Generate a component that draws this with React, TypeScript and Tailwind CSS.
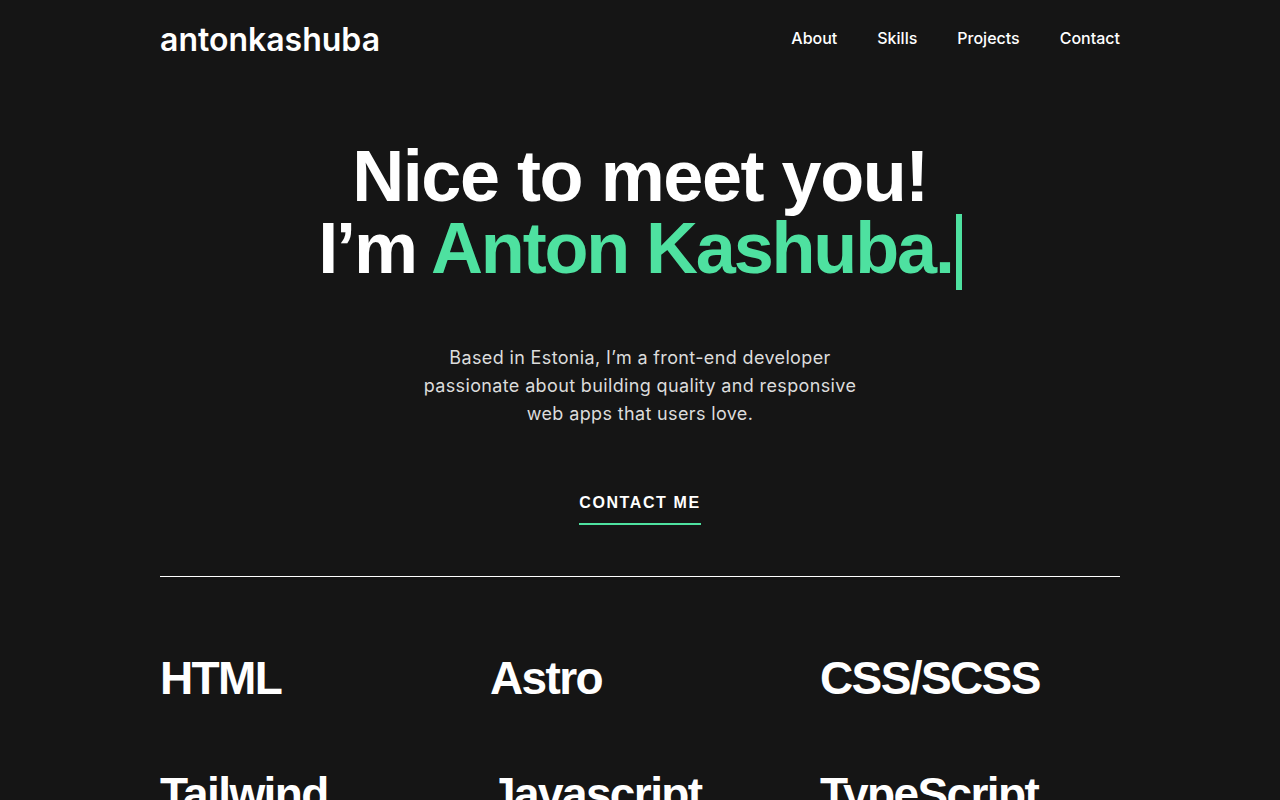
import React from "react"

const skills = ["HTML", "Astro", "CSS/SCSS", "Tailwind", "Javascript", "TypeScript"]
const navLinks = ["About", "Skills", "Projects", "Contact"]

const App = () => {
  return (
    <div className="min-h-screen bg-[#151515] text-white font-['Inter',sans-serif] overflow-hidden">
      <div className="mx-auto w-[960px]">
        <header className="flex h-20 items-center justify-between">
          <a href="#" className="text-[32px] font-semibold leading-none">
            antonkashuba
          </a>
          <nav className="flex gap-10 pb-1 text-[16px] font-medium">
            {navLinks.map((link) => (
              <a key={link} href={`#${link.toLowerCase()}`} className="hover:text-[#4ee1a0]">
                {link}
              </a>
            ))}
          </nav>
        </header>

        <section className="flex flex-col items-center pt-[60px] text-center">
          <h1 className="font-['Liberation_Sans',Arial,sans-serif] text-[72px] font-bold leading-[72px] tracking-[-0.02em]">
            Nice to meet you!
            <br />
            <span className="tracking-[-0.03em]">
              I’m <span className="text-[#4ee1a0]">Anton Kashuba.</span>
            </span>
            <span className="ml-[3px] inline-block h-[76px] w-[6px] bg-[#4ee1a0] align-[-17px]" />
          </h1>
          <p className="mt-[54px] text-[18px] leading-[28px] tracking-[0.02em] text-[#dcdcdc]">
            Based in Estonia, I’m a front-end developer
            <br />
            passionate about building quality and responsive
            <br />
            web apps that users love.
          </p>
          <a
            href="#contact"
            className="mt-[63px] border-b-2 border-[#4ee1a0] pb-2 font-['Liberation_Sans',Arial,sans-serif] text-[16px] font-bold leading-6 tracking-[0.1em]"
          >
            CONTACT ME
          </a>
        </section>

        <hr className="mt-[51px] border-t border-white" />

        <section className="grid grid-cols-3 gap-x-[30px] gap-y-[70px] pt-[78px]">
          {skills.map((skill) => (
            <h3
              key={skill}
              className="font-['Liberation_Sans',Arial,sans-serif] text-[46px] font-bold leading-none tracking-[-0.035em]"
            >
              {skill}
            </h3>
          ))}
        </section>
      </div>
    </div>
  )
}

export default App
